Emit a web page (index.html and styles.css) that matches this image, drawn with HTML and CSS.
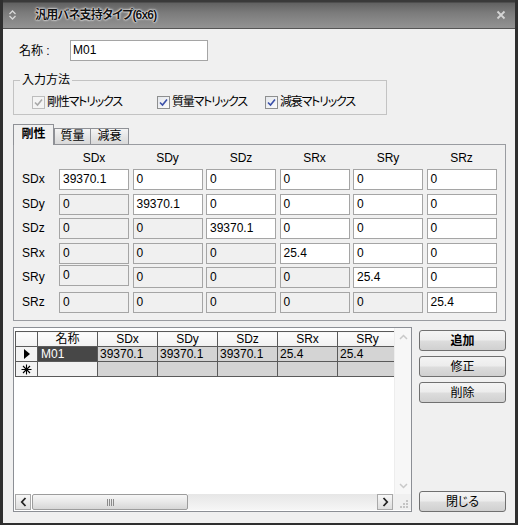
FILE: index.html
```html
<!DOCTYPE html>
<html lang="ja">
<head>
<meta charset="utf-8">
<title>汎用バネ支持タイプ(6x6)</title>
<link rel="stylesheet" href="styles.css">
</head>
<body>
<div class="window">
  <div class="titlebar">
    <span class="t-icon">
      <svg width="9" height="12" viewBox="0 0 9 12"><path d="M1.5 5 L4.5 2 L7.5 5 M1.5 7 L4.5 10 L7.5 7" fill="none" stroke="#d8d8d8" stroke-width="1.3"/></svg>
    </span>
    <span class="t-title">汎用バネ支持タイプ(6x6)</span>
    <span class="t-close">
      <svg width="10" height="10" viewBox="0 0 10 10"><path d="M1.5 1.5 L8.5 8.5 M8.5 1.5 L1.5 8.5" fill="none" stroke="#d4d4d4" stroke-width="1.8"/></svg>
    </span>
  </div>

  <div class="content">
    <div class="name-row">
      <span class="name-label">名称 :</span>
      <div class="textbox">M01</div>
    </div>

    <fieldset class="group">
      <legend>入力方法</legend>
      <div class="checks">
        <span class="check w1"><span class="box disabled"><svg width="11" height="11" viewBox="0 0 11 11"><path d="M2 5.5 L4.5 8 L9 2.5" fill="none" stroke="#a8a8a8" stroke-width="1.6"/></svg></span><span class="check-text">剛性マトリックス</span></span>
        <span class="check w2"><span class="box"><svg width="11" height="11" viewBox="0 0 11 11"><path d="M2 5.5 L4.5 8 L9 2.5" fill="none" stroke="#3a4fa8" stroke-width="1.6"/></svg></span><span class="check-text">質量マトリックス</span></span>
        <span class="check"><span class="box"><svg width="11" height="11" viewBox="0 0 11 11"><path d="M2 5.5 L4.5 8 L9 2.5" fill="none" stroke="#3a4fa8" stroke-width="1.6"/></svg></span><span class="check-text">減衰マトリックス</span></span>
      </div>
    </fieldset>

    <div class="tabs">
      <div class="tab active t1">剛性</div>
      <div class="tab t2">質量</div>
      <div class="tab t3">減衰</div>
    </div>
    <div class="panel">
      <div class="matrix">
        <span></span>
        <span class="colhead">SDx</span>
        <span class="colhead">SDy</span>
        <span class="colhead">SDz</span>
        <span class="colhead">SRx</span>
        <span class="colhead">SRy</span>
        <span class="colhead">SRz</span>

        <span class="rowhead">SDx</span>
        <span class="cell">39370.1</span>
        <span class="cell">0</span>
        <span class="cell">0</span>
        <span class="cell">0</span>
        <span class="cell">0</span>
        <span class="cell">0</span>

        <span class="rowhead">SDy</span>
        <span class="cell dis">0</span>
        <span class="cell">39370.1</span>
        <span class="cell">0</span>
        <span class="cell">0</span>
        <span class="cell">0</span>
        <span class="cell">0</span>

        <span class="rowhead">SDz</span>
        <span class="cell dis">0</span>
        <span class="cell dis">0</span>
        <span class="cell">39370.1</span>
        <span class="cell">0</span>
        <span class="cell">0</span>
        <span class="cell">0</span>

        <span class="rowhead">SRx</span>
        <span class="cell dis">0</span>
        <span class="cell dis">0</span>
        <span class="cell dis">0</span>
        <span class="cell">25.4</span>
        <span class="cell">0</span>
        <span class="cell">0</span>

        <span class="rowhead">SRy</span>
        <span class="cell dis raised">0</span>
        <span class="cell dis">0</span>
        <span class="cell dis">0</span>
        <span class="cell dis">0</span>
        <span class="cell">25.4</span>
        <span class="cell">0</span>

        <span class="rowhead">SRz</span>
        <span class="cell dis">0</span>
        <span class="cell dis">0</span>
        <span class="cell dis">0</span>
        <span class="cell dis">0</span>
        <span class="cell dis">0</span>
        <span class="cell">25.4</span>
      </div>
    </div>

    <div class="bottom">
      <div class="gridview">
        <div class="gv-top">
          <div class="gv-data">
            <table class="dg">
              <colgroup><col class="c-rh"><col class="c-w"><col class="c-w"><col class="c-w"><col class="c-w"><col class="c-w"><col class="c-w"></colgroup>
              <thead>
                <tr><th></th><th>名称</th><th>SDx</th><th>SDy</th><th>SDz</th><th>SRx</th><th>SRy</th></tr>
              </thead>
              <tbody>
                <tr>
                  <td class="rh"><svg width="6" height="10" viewBox="0 0 6 10"><path d="M0 0 L6 5 L0 10 Z" fill="#000"/></svg></td>
                  <td class="sel">M01</td><td>39370.1</td><td>39370.1</td><td>39370.1</td><td>25.4</td><td>25.4</td>
                </tr>
                <tr>
                  <td class="rh"><svg width="11" height="11" viewBox="0 0 11 11"><path d="M5.5 0.5 V10.5 M0.5 5.5 H10.5 M2 2 L9 9 M9 2 L2 9" stroke="#000" stroke-width="1.1" fill="none"/></svg></td>
                  <td class="newname"></td><td></td><td></td><td></td><td></td><td></td>
                </tr>
              </tbody>
            </table>
          </div>
          <div class="vscroll">
            <svg class="vs-up" width="9" height="6" viewBox="0 0 9 6"><path d="M1 5 L4.5 1.5 L8 5" fill="none" stroke="#c9c9c9" stroke-width="1.5"/></svg>
            <svg class="vs-down" width="9" height="6" viewBox="0 0 9 6"><path d="M1 1 L4.5 4.5 L8 1" fill="none" stroke="#c9c9c9" stroke-width="1.5"/></svg>
          </div>
        </div>
        <div class="hscroll">
          <div class="hs-btn"><svg width="7" height="10" viewBox="0 0 7 10"><path d="M5.5 1 L1.8 5 L5.5 9" fill="none" stroke="#222" stroke-width="1.8"/></svg></div>
          <div class="hs-thumb"><span class="grip"></span></div>
          <div class="hs-track"></div>
          <div class="hs-btn"><svg width="7" height="10" viewBox="0 0 7 10"><path d="M1.5 1 L5.2 5 L1.5 9" fill="none" stroke="#222" stroke-width="1.8"/></svg></div>
          <div class="hs-corner"><svg width="12" height="12" viewBox="0 0 12 12"><g fill="#c4c4c4"><rect x="9" y="3" width="2" height="2"/><rect x="6" y="6" width="2" height="2"/><rect x="9" y="6" width="2" height="2"/><rect x="3" y="9" width="2" height="2"/><rect x="6" y="9" width="2" height="2"/><rect x="9" y="9" width="2" height="2"/></g></svg></div>
        </div>
      </div>
      <div class="btns">
        <button class="btn bold">追加</button>
        <button class="btn">修正</button>
        <button class="btn">削除</button>
        <button class="btn close">閉じる</button>
      </div>
    </div>
  </div>
</div>
</body>
</html>
```

FILE: styles.css
```css
* { box-sizing: border-box; }
html, body { margin: 0; padding: 0; }
body {
  font-family: "Liberation Sans", "Noto Sans CJK JP", sans-serif;
  font-size: 12px;
  color: #000;
  background: #f0f0f0;
  font-feature-settings: "palt";
}
.window {
  width: 518px;
  height: 525px;
  border-left: 3px solid #2f2f2f;
  border-right: 3px solid #2f2f2f;
  border-bottom: 2px solid #2f2f2f;
  background: #f0f0f0;
  display: flex;
  flex-direction: column;
}
.titlebar {
  height: 29px;
  flex: none;
  display: flex;
  align-items: center;
  padding: 2px 9px 0 5px;
  background: linear-gradient(#3a3a3a 0, #3a3a3a 2px, #626262 3px, #7b7b7b 45%, #939393 100%);
  border-bottom: 1px solid #555;
}
.t-icon { width: 9px; height: 12px; display: flex; }
.t-title {
  margin-left: 18px;
  font-weight: bold;
  font-size: 12px;
  line-height: 14px;
  letter-spacing: -0.8px;
  color: #151515;
  text-shadow: 0 0 2px #fff, 0 0 1px #fff, 0 0 3px rgba(255,255,255,0.8);
  flex: 1;
}
.t-close { width: 10px; height: 10px; display: flex; filter: blur(0.3px); }

.content {
  flex: 1;
  display: flex;
  flex-direction: column;
  padding: 0 9px 0 10px;
}
.name-row {
  margin-top: 11px;
  height: 21px;
  display: flex;
  align-items: center;
}
.name-label { width: 57px; padding-left: 6px; line-height: 14px; }
.textbox {
  width: 138px;
  height: 21px;
  border: 1px solid #a5a5a5;
  background: #fff;
  padding-left: 2px;
  line-height: 19px;
}

.group {
  margin: 12px 0 0 0;
  width: 374px;
  border: 1px solid #c3c3c3;
  padding: 0 0 5px 6px;
  min-width: 0;
}
.group legend {
  padding: 0 2px;
  line-height: 14px;
  font-size: 12px;
}
.checks {
  display: flex;
  align-items: center;
  height: 14px;
  margin-top: 8px;
  padding-left: 12px;
}
.check { display: flex; align-items: center; }
.check.w1 { width: 125px; }
.check.w2 { width: 108px; }
.box {
  width: 13px;
  height: 13px;
  border: 1px solid #8e8f8f;
  background: linear-gradient(135deg, #e4e7ec, #fbfbfb);
  display: flex;
  align-items: center;
  justify-content: center;
  margin-right: 2px;
}
.box.disabled { border-color: #bdbdbd; background: #f4f4f4; }
.check-text { line-height: 14px; letter-spacing: -1.2px; }

.tabs {
  margin-top: 9px;
  height: 21px;
  display: flex;
  align-items: flex-end;
  position: relative;
  z-index: 1;
  margin-bottom: -1px;
}
.tab {
  height: 17px;
  border: 1px solid #8f9196;
  background: linear-gradient(#f4f4f4, #e6e6e6 50%, #d9d9d9);
  text-align: center;
  line-height: 15px;
}
.tab.active {
  height: 21px;
  border-bottom: none;
  background: #f0f0f0;
  font-weight: bold;
  line-height: 18px;
}
.t1 { width: 41px; }
.t2 { width: 37px; margin-left: 0; border-left: 1px solid #8f9196; }
.t3 { width: 38px; border-left: none; }

.panel {
  height: 177px;
  border: 1px solid #9a9ca1;
  background: #f0f0f0;
}
.matrix {
  display: grid;
  grid-template-columns: 41.5px repeat(6, 70px);
  grid-template-rows: 13px repeat(6, 21px);
  column-gap: 3.5px;
  row-gap: 3.6px;
  padding-top: 7.4px;
}
.colhead { text-align: center; line-height: 13px; }
.rowhead { padding-left: 8px; line-height: 21px; }
.cell {
  height: 21px;
  border: 1px solid #a5a5a5;
  background: #fff;
  padding: 2px 0 0 3px;
  line-height: 14px;
}
.cell.dis { background: #f0f0f0; }
.cell.raised { margin-top: -2px; }

.bottom {
  margin-top: 6px;
  height: 185px;
  display: flex;
  gap: 7px;
  flex: none;
}
.gridview {
  width: 399px;
  border: 1px solid #8c8f95;
  background: #fff;
  display: flex;
  flex-direction: column;
}
.gv-top { flex: 1; display: flex; min-height: 0; }
.gv-data { flex: 1; overflow: hidden; padding: 3px 0 0 1px; }
.vscroll {
  width: 17px;
  background: #f7f7f7;
  border-left: 1px solid #ededed;
  display: flex;
  flex-direction: column;
  align-items: center;
  justify-content: space-between;
  padding: 6px 0 5px;
}
.dg {
  border-collapse: collapse;
  table-layout: fixed;
  width: 382px;
}
.c-rh { width: 22px; }
.c-w { width: 60px; }
.dg th, .dg td {
  height: 15px;
  padding: 0 0 0 2px;
  line-height: 13px;
  font-size: 12px;
  border: 1px solid #5a5a5a;
  white-space: nowrap;
  overflow: hidden;
}
.dg th {
  font-weight: normal;
  text-align: center;
  background: linear-gradient(#fdfdfd, #f1f1f1);
  padding: 0;
}
.dg td { background: #d4d4d4; }
.dg td.rh {
  background: #f3f3f3;
  text-align: center;
  padding: 0;
  vertical-align: middle;
}
.dg td.rh svg { display: block; margin: 0 auto; }
.dg td.sel { background: #474747; color: #fff; padding-left: 3px; }
.dg td.newname { background: #f2f2f2; }

.hscroll {
  height: 17px;
  display: flex;
  padding-left: 1px;
  flex: none;
}
.hs-btn {
  width: 16px;
  height: 16px;
  border: 1px solid #a9a9a9;
  background: linear-gradient(#f7f7f7, #dedede);
  display: flex;
  align-items: center;
  justify-content: center;
}
.hs-thumb {
  width: 156px;
  height: 16px;
  margin-left: 1px;
  border: 1px solid #9c9c9c;
  border-radius: 2px;
  background: linear-gradient(#f6f6f6, #e8e8e8 50%, #d6d6d6);
  display: flex;
  align-items: center;
  justify-content: center;
}
.grip {
  width: 7px;
  height: 7px;
  background: repeating-linear-gradient(90deg, #8a8a8a 0 1px, transparent 1px 2px);
}
.hs-track {
  flex: 1;
  height: 16px;
  background: linear-gradient(#e6e6e6, #f6f6f6);
}
.hs-corner {
  width: 18px;
  height: 16px;
  background: #f0f0f0;
  display: flex;
  align-items: flex-end;
  justify-content: flex-end;
  padding: 0 2px 1px 0;
}

.btns {
  width: 87px;
  display: flex;
  flex-direction: column;
  gap: 5px;
  padding-top: 3px;
}
.btn {
  width: 87px;
  height: 21px;
  border: 1px solid #707070;
  border-radius: 3px;
  background: linear-gradient(#f4f4f4 0%, #ececec 48%, #dddddd 52%, #d0d0d0 100%);
  font-family: "Liberation Sans", "Noto Sans CJK JP", sans-serif;
  font-feature-settings: "palt";
  font-size: 12px;
  line-height: 18px;
  color: #000;
  padding: 0;
  text-align: center;
}
.btn.bold { font-weight: bold; }
.btn.close { margin-top: auto; }
```
